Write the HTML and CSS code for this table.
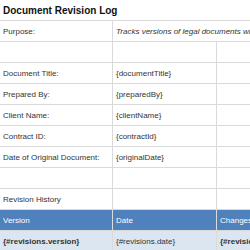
FILE: index.html
```html
<!DOCTYPE html>
<html>
<head>
<meta charset="utf-8">
<link rel="stylesheet" href="styles.css">
</head>
<body>
<table class="sheet">
  <colgroup>
    <col class="c1"><col class="c2"><col class="c3">
  </colgroup>
  <tr><td class="title" colspan="3">Document Revision Log</td></tr>
  <tr><td>Purpose:</td><td class="purpose" colspan="2">Tracks versions of legal documents with changes and approvals</td></tr>
  <tr><td></td><td></td><td></td></tr>
  <tr><td>Document Title:</td><td>{documentTitle}</td><td></td></tr>
  <tr><td>Prepared By:</td><td>{preparedBy}</td><td></td></tr>
  <tr><td>Client Name:</td><td>{clientName}</td><td></td></tr>
  <tr><td>Contract ID:</td><td>{contractId}</td><td></td></tr>
  <tr><td>Date of Original Document:</td><td>{originalDate}</td><td></td></tr>
  <tr><td></td><td></td><td></td></tr>
  <tr><td>Revision History</td><td></td><td></td></tr>
  <tr class="head"><td>Version</td><td>Date</td><td>Changes</td></tr>
  <tr class="data"><td class="b">{#revisions.version}</td><td>{#revisions.date}</td><td class="b">{#revisions.changes}</td></tr>
</table>
</body>
</html>
```

FILE: styles.css
```css
html, body {
  margin: 0;
  padding: 0;
  overflow: hidden;
  background: #fff;
}
.sheet {
  border-collapse: separate;
  border-spacing: 0;
  table-layout: fixed;
  width: 337px;
  font-family: "Liberation Sans", Arial, sans-serif;
  font-size: 8px;
  color: #333;
}
.c1 { width: 113px; }
.c2 { width: 104px; }
.c3 { width: 120px; }
.sheet td {
  height: 20px;
  padding: 0 3px;
  border-right: 1px solid #dadada;
  border-bottom: 1px solid #dadada;
  white-space: nowrap;
  overflow: hidden;
  vertical-align: middle;
}
.sheet td.title {
  font-size: 10px;
  font-weight: bold;
  color: #111;
  border-right: none;
}
.sheet td.purpose {
  font-style: italic;
}
.head td {
  background: #4f81bd;
  color: #fff;
}
.data td {
  background: #dce6f1;
}
.b { font-weight: bold; }
```
